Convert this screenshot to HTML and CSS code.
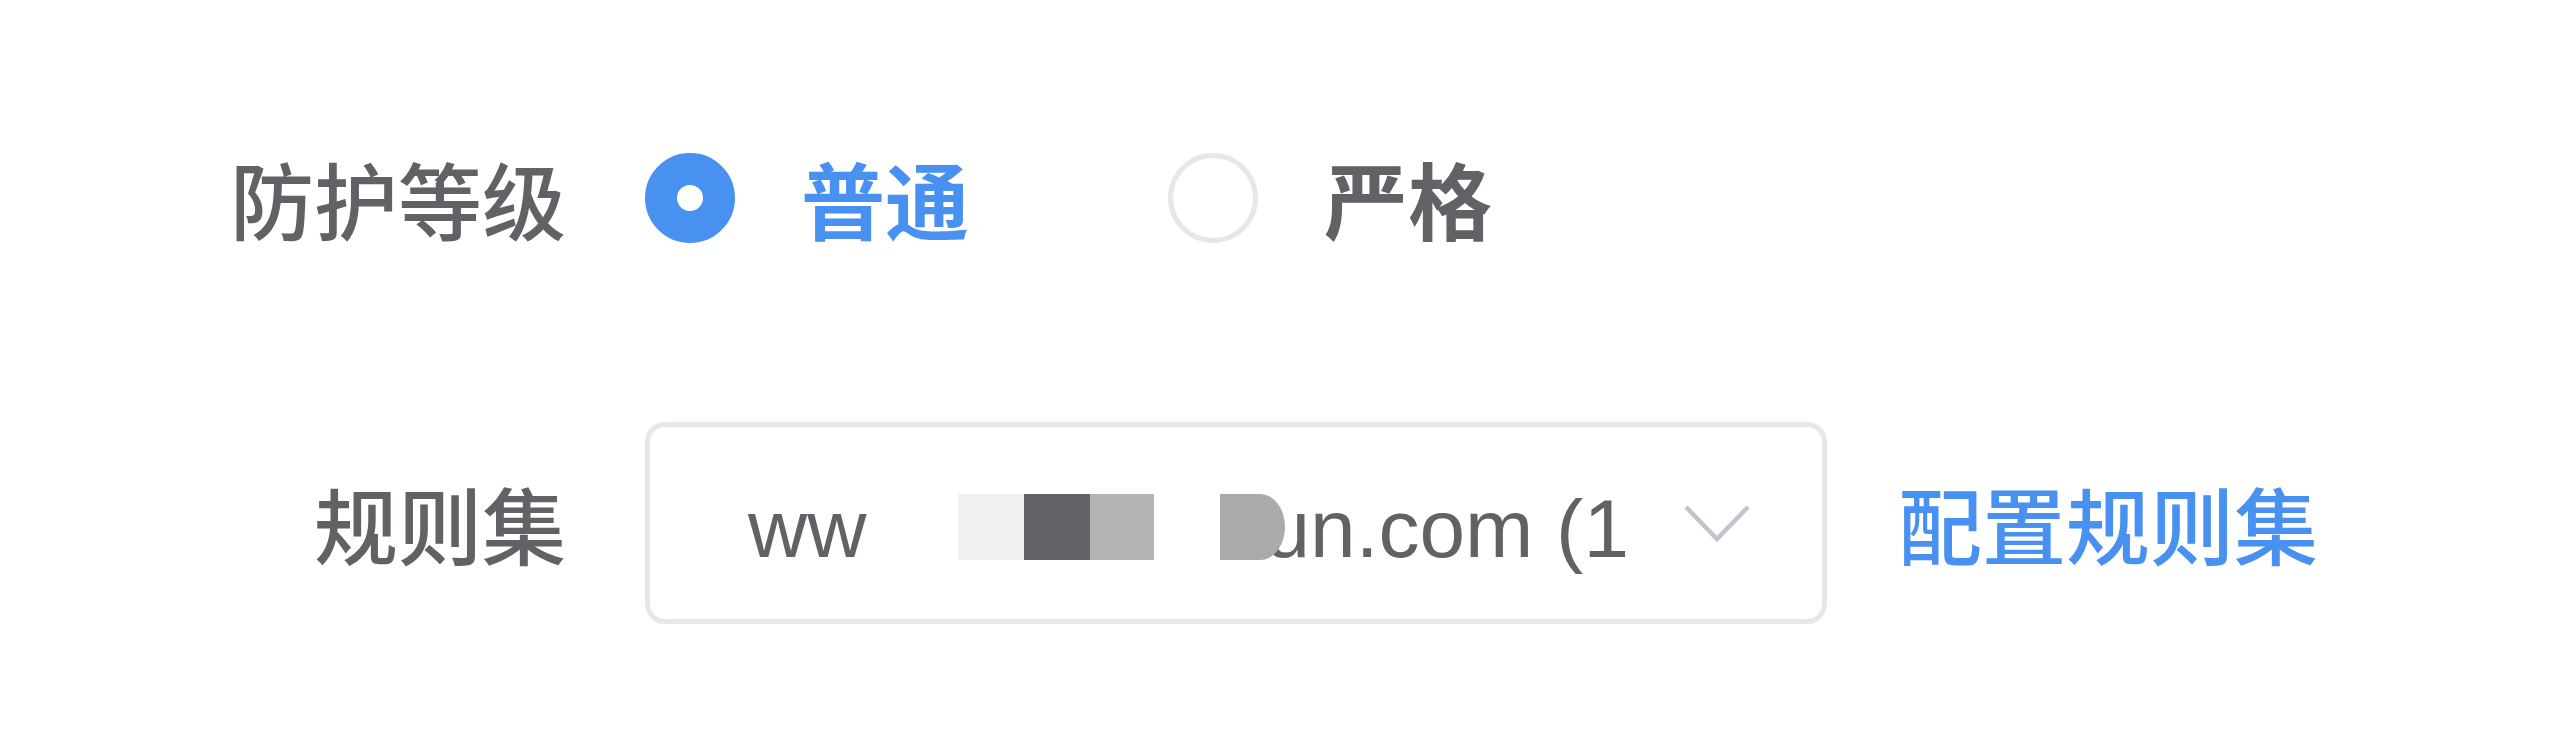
FILE: index.html
```html
<!DOCTYPE html>
<html lang="zh-CN">
<head>
<meta charset="utf-8">
<title>防护等级</title>
<link rel="stylesheet" href="styles.css">
</head>
<body>
<form class="form">
  <div class="form-item level-row">
    <label class="form-label">防护等级</label>
    <div class="form-content radios">
      <label class="radio is-checked">
        <span class="radio-input"><span class="radio-dot"></span></span>
        <span class="radio-label">普通</span>
      </label>
      <label class="radio">
        <span class="radio-input"></span>
        <span class="radio-label">严格</span>
      </label>
    </div>
  </div>
  <div class="form-item rules-row">
    <label class="form-label">规则集</label>
    <div class="form-content">
      <div class="select">
        <div class="select-value">ww<span class="mosaic"><span class="px px-a"></span><span class="px px-b"></span><span class="px px-c"></span><span class="px px-gap"></span><span class="px px-d"></span></span>un.com (1</div>
        <svg class="chevron" width="66" height="38" viewBox="0 0 66 38" aria-hidden="true"><path d="M2 2 L33 34 L64 2" fill="none" stroke="#c0c4cc" stroke-width="4.5" stroke-linejoin="miter"/></svg>
      </div>
      <a class="link" href="#">配置规则集</a>
    </div>
  </div>
</form>
</body>
</html>
```

FILE: styles.css
```css
html, body {
  margin: 0;
  padding: 0;
  background: #ffffff;
}

body {
  font-family: "Noto Sans CJK SC", "Noto Sans", sans-serif;
  color: #606266;
}

.form {
  padding-top: 148px;
}

.form-item {
  display: flex;
  align-items: center;
}

.level-row {
  height: 100px;
}

.rules-row {
  margin-top: 174px;
}

.form-label {
  width: 566px;
  flex: none;
  text-align: right;
  font-size: 84px;
  line-height: 1;
  font-weight: 500;
  color: #606266;
}

.form-content {
  margin-left: 79px;
  display: flex;
  align-items: center;
}

.radio {
  display: flex;
  align-items: center;
  margin-right: 199px;
}

.radio-input {
  width: 90px;
  height: 90px;
  box-sizing: border-box;
  border-radius: 50%;
  border: 5px solid #e6e7ea;
  background: #fff;
  display: flex;
  align-items: center;
  justify-content: center;
}

.radio.is-checked .radio-input {
  border-color: #4891f1;
  background: #4891f1;
}

.radio-dot {
  width: 26px;
  height: 26px;
  border-radius: 50%;
  background: #ffffff;
}

.radio-label {
  margin-left: 66px;
  font-size: 84px;
  line-height: 1;
  font-weight: 700;
  color: #606266;
}

.radio.is-checked .radio-label {
  color: #4891f1;
}

.select {
  width: 1182px;
  height: 202px;
  box-sizing: border-box;
  border: 5px solid #e6e7ea;
  border-radius: 20px;
  display: flex;
  align-items: center;
  padding-left: 98px;
}

.select-value {
  flex: 1;
  min-width: 0;
  overflow: hidden;
  white-space: nowrap;
  font-family: "Liberation Sans", Arial, sans-serif;
  font-size: 82px;
  line-height: 1.15;
  padding-top: 12px;
  color: #606266;
}

.mosaic {
  display: inline-flex;
  vertical-align: -3px;
  margin-left: 92px;
  margin-right: -21px;
  position: relative;
  z-index: 1;
}

.px {
  display: block;
  width: 66px;
  height: 66px;
}

.px-a { background: #f0f0f0; }
.px-b { background: #626367; }
.px-c { background: #b4b4b6; width: 64px; }
.px-gap { background: transparent; }
.px-d { background: #aaaaac; width: 65px; border-radius: 0 30px 30px 0 / 0 40px 40px 0; }

.chevron {
  flex: none;
  margin-left: 46px;
  margin-right: 72px;
  margin-top: 2px;
}

.link {
  margin-left: 71px;
  font-size: 84px;
  line-height: 1;
  font-weight: 500;
  color: #4891f1;
  text-decoration: none;
}
```
